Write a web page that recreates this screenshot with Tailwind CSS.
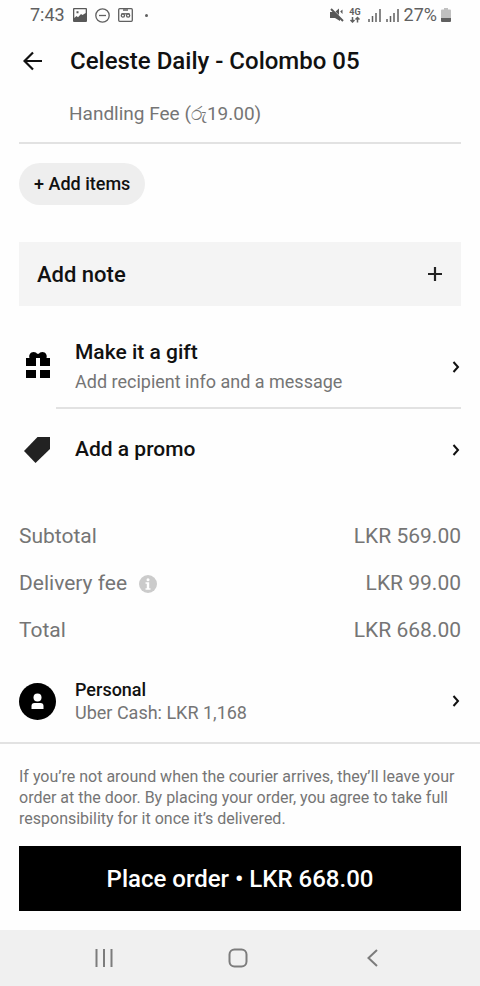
<!DOCTYPE html>
<html lang="en">
<head>
<meta charset="utf-8">
<meta name="viewport" content="width=device-width, initial-scale=1">
<title>Celeste Daily - Colombo 05</title>
<script src="https://cdn.jsdelivr.net/npm/@tailwindcss/browser@4"></script>
</head>
<body class="flex min-h-screen flex-col bg-[#fefefe] font-['Roboto','Noto_Sans',sans-serif] text-[#111111]">
<div class="flex h-[30px] items-center justify-between pr-[29px] pl-[30px] text-lg text-[#606060]">
  <div class="flex items-center gap-2">
    <span>7:43</span>
    <svg class="h-[14px] w-[14px]" viewBox="0 0 14 14"><path fill="#585858" fill-rule="evenodd" d="M1 0h12q1 0 1 1v12q0 1-1 1H1q-1 0-1-1V1q0-1 1-1zM1.300 1.300v8.700l2.200-2 1.500 1.200L8 6l1.500 1L12.700 5V1.300zM3.500 3.300h2v2h-2z"/></svg>
    <svg class="h-[15px] w-[15px]" viewBox="0 0 15 15" fill="none" stroke="#606060" stroke-width="1.300"><circle cx="7.500" cy="7.500" r="6.700"/><path d="M4 7.500h7"/></svg>
    <svg class="h-[14px] w-[15px]" viewBox="0 0 15 14" fill="none" stroke="#606060" stroke-width="1.300"><rect x=".7" y=".7" width="13.600" height="12.600" rx="1"/><path d="M5 2h5" stroke-width="1.500"/><circle cx="4.900" cy="7.500" r="1.600"/><circle cx="10.100" cy="7.500" r="1.600"/><path d="M3.500 5.800h8"/></svg>
    <span class="ml-1 h-[3px] w-[3px] rounded-full bg-[#606060]"></span>
  </div>
  <div class="flex items-center gap-[5px]">
    <svg class="h-[14px] w-[14px]" viewBox="0 0 14 14"><path fill="#585858" d="M0 4h4L10 9.500V13L5 10H0zM5.500 3.500 9 .5V7zM10.200 3.500l2.300-2v4.500z"/><path stroke="#585858" stroke-width="2" d="M1 1l12 12"/></svg>
    <svg class="h-[15px] w-[12px]" viewBox="0 0 12 15"><text x="6" y="7" text-anchor="middle" font-size="9" font-weight="700" fill="#606060">4G</text><path fill="none" stroke="#606060" stroke-width="1.500" d="M3.500 9v5M1.500 12l2 2 2-2M8.500 14.500v-5M6.500 11.500l2-2 2 2"/></svg>
    <svg class="ml-0.5 h-[14px] w-[13px]" viewBox="0 0 13 14" stroke="#606060" stroke-width="1.500"><path d="M1 11v3M4.500 8v6M8 5v9M12 1v13"/></svg>
    <svg class="h-[14px] w-[13px]" viewBox="0 0 13 14" stroke="#606060" stroke-width="1.500"><path d="M1 11v3M4.500 8v6M8 5v9M12 1v13"/></svg>
    <span class="flex items-center gap-1">27%
      <svg class="h-[14px] w-[10px]" viewBox="0 0 10 14"><path fill="#c0c0c0" d="M3 0h4v1.500h2q1 0 1 1V10H0V2.500q0-1 1-1h2z"/><path fill="#606060" d="M0 10h10v3q0 1-1 1H1q-1 0-1-1z"/></svg>
    </span>
  </div>
</div>

<header class="flex h-[62px] items-center gap-[27px] px-[23px]">
  <button type="button" aria-label="Back" class="flex"><svg class="h-5 w-5" viewBox="0 0 20 20" fill="none" stroke="#111" stroke-width="2.200"><path d="M19 10H2M10 1.500 1.500 10l8.500 8.500"/></svg></button>
  <h1 class="text-2xl font-medium whitespace-nowrap">Celeste Daily - Colombo 05</h1>
</header>

<main class="px-[19px]">
  <p class="flex h-[52px] items-center border-b-2 border-[#e2e2e2] pb-1.5 pl-[50px] text-[19px] text-[#757575]">Handling Fee (රු19.00)</p>
  <button type="button" class="mt-[19px] flex h-[42px] items-center rounded-full bg-[#eeeeee] px-[15px] text-lg font-medium">+ Add items</button>
  <button type="button" class="mt-[37px] flex h-16 w-full items-center justify-between bg-[#f4f4f4] px-[18px] text-[22px] font-medium">Add note
    <svg class="h-4 w-4" viewBox="0 0 16 16" stroke="#222" stroke-width="2.200"><path d="M1 8h14M8 1v14"/></svg>
  </button>
  <button type="button" class="mt-5 flex w-full items-center text-left">
    <span class="flex w-[37px] shrink-0 justify-center pb-1"><svg class="h-[26px] w-6" viewBox="0 0 24 26"><path d="M0 6h3.500C2.500 3 4.500 0 7.500 0c2 0 3 .8 3.500 1.700h2C13.500.8 14.500 0 16.500 0c3 0 5 3 4 6H24v8H14V6h-4v8H0zM0 18h10v8H0zM14 18h10v8H14z"/></svg></span>
    <span class="ml-[19px] flex h-[81px] grow flex-col justify-center">
      <span class="text-[21px] leading-[30px] font-medium">Make it a gift</span>
      <span class="text-lg leading-[30px] text-[#757575]">Add recipient info and a message</span>
    </span>
    <svg class="mr-px h-3 w-2" viewBox="0 0 8 12" fill="none" stroke="#111" stroke-width="2"><path d="M1.500 1 6 6l-4.500 5"/></svg>
  </button>
  <hr class="ml-[37px] border-t-2 border-[#e2e2e2]">
  <button type="button" class="flex h-[82px] w-full items-center text-left">
    <span class="flex w-[37px] shrink-0 justify-center pr-0.5"><svg class="h-[26px] w-[26px]" viewBox="0 0 26 26"><path fill="#222" d="M13.500 0H26v12L11.500 26 0 14z"/></svg></span>
    <span class="ml-[19px] grow text-[21px] font-medium">Add a promo</span>
    <svg class="mr-px h-3 w-2" viewBox="0 0 8 12" fill="none" stroke="#111" stroke-width="2"><path d="M1.500 1 6 6l-4.500 5"/></svg>
  </button>
  <dl class="mt-[22px] text-[21px] leading-[47px] text-[#757575]">
    <div class="flex justify-between"><dt>Subtotal</dt><dd>LKR 569.00</dd></div>
    <div class="flex justify-between"><dt class="flex items-center gap-3">Delivery fee
      <button type="button" aria-label="Delivery fee details"><svg class="h-[18px] w-[18px]" viewBox="0 0 18 18"><circle cx="9" cy="9" r="9" fill="#cbcbcb"/><circle cx="9" cy="4.800" r="1.500" fill="#fff"/><path fill="#fff" d="M6.500 7.200h3.700v6h1.300v1.500h-5v-1.500h1.300V8.700H6.500z"/></svg></button></dt><dd>LKR 99.00</dd></div>
    <div class="flex justify-between"><dt>Total</dt><dd>LKR 668.00</dd></div>
  </dl>
</main>

<button type="button" class="flex h-[90px] items-center border-b-2 border-[#e2e2e2] px-[19px] pt-1.5 text-left">
  <svg class="h-[37px] w-[37px] shrink-0" viewBox="0 0 37 37"><circle cx="18.500" cy="18.500" r="18.500"/><circle cx="18.500" cy="14.500" r="4" fill="#fff"/><path fill="#fff" d="M12.500 26v-3q0-3 3-3h6q3 0 3 3v3z"/></svg>
  <span class="ml-[19px] flex grow flex-col text-lg leading-[23px]">
    <span class="font-medium">Personal</span>
    <span class="text-[#757575]">Uber Cash: LKR 1,168</span>
  </span>
  <svg class="mr-px h-3 w-2" viewBox="0 0 8 12" fill="none" stroke="#111" stroke-width="2"><path d="M1.500 1 6 6l-4.500 5"/></svg>
</button>

<footer class="px-[19px] pt-[22px] pb-[19px]">
  <p class="text-base leading-[21px] text-[#757575]">If you’re not around when the courier arrives, they’ll leave your order at the door. By placing your order, you agree to take full responsibility for it once it’s delivered.</p>
  <button type="button" class="mt-[17px] h-[65px] w-full bg-black text-2xl font-medium text-white">Place order • LKR 668.00</button>
</footer>

<nav class="mt-auto flex h-14 items-center justify-between bg-[#f0f0f0] pr-[98px] pl-[94px]">
  <button type="button" aria-label="Recent apps" class="flex w-5 justify-center"><svg class="h-[18px] w-[18px]" viewBox="0 0 18 18" stroke="#7c7c7c" stroke-width="2"><path d="M1.500 0v18M9 0v18M16.500 0v18"/></svg></button>
  <button type="button" aria-label="Home" class="flex w-5 justify-center"><svg class="h-5 w-5" viewBox="0 0 20 20" fill="none" stroke="#7c7c7c" stroke-width="2"><rect x="1.500" y="1.500" width="17" height="17" rx="5"/></svg></button>
  <button type="button" aria-label="Back" class="flex w-5 justify-center"><svg class="h-[18px] w-[11px]" viewBox="0 0 11 18" fill="none" stroke="#7c7c7c" stroke-width="2"><path d="M10 1 1.500 9l8.500 8"/></svg></button>
</nav>
</body>
</html>
